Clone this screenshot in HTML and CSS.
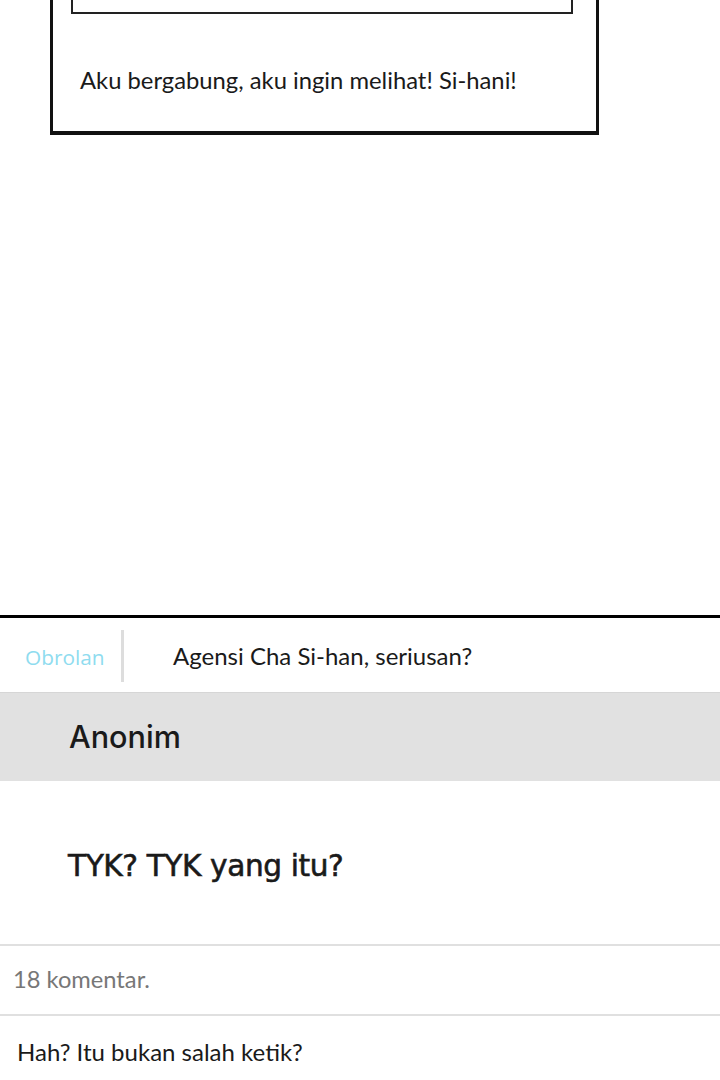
FILE: index.html
```html
<!DOCTYPE html>
<html lang="id">
<head>
<meta charset="utf-8">
<title>Komik</title>
<link rel="stylesheet" href="styles.css">
</head>
<body>
<div class="page">
  <section class="panel">
    <div class="panel-box">
      <div class="inner-box"></div>
      <p class="panel-text">Aku bergabung, aku ingin melihat! Si-hani!</p>
    </div>
  </section>
  <section class="chat">
    <div class="chat-head">
      <span class="chat-tab">Obrolan</span>
      <span class="chat-divider"></span>
      <span class="chat-title">Agensi Cha Si-han, seriusan?</span>
    </div>
    <div class="chat-author">Anonim</div>
    <div class="chat-body">TYK? TYK yang itu?</div>
    <div class="chat-count">18 komentar.</div>
    <div class="chat-comment">Hah? Itu bukan salah ketik?</div>
  </section>
</div>
</body>
</html>
```

FILE: styles.css
```css
* { box-sizing: border-box; }
html, body { margin: 0; padding: 0; background: #fff; }
body { width: 720px; height: 1080px; overflow: hidden; font-family: "Lato", "Open Sans", sans-serif; color: #1a1a1a; }
.page { display: flex; flex-direction: column; }

.panel { height: 615px; padding-left: 50px; }
.panel-box {
  width: 549px;
  margin-top: -40px;
  border: 3px solid #111;
  border-bottom-width: 4px;
  height: 175px;
  padding: 0 23px 0 18px;
  display: flex;
  flex-direction: column;
}
.inner-box { height: 51px; border: 2px solid #222; border-top: none; }
.panel-text {
  margin: 53px 0 0 9px;
  font-size: 23.8px;
  line-height: 26px;
}

.chat { border-top: 3px solid #000; display: flex; flex-direction: column; }
.chat-head { height: 74px; display: flex; align-items: center; }
.chat-tab { width: 121px; padding-left: 25px; color: #8fdcef; font-family: "Open Sans", sans-serif; font-size: 20.8px; padding-top: 3px; }
.chat-divider { width: 3px; height: 52px; background: #dddddd; margin-top: 2px; }
.chat-title { padding-left: 49px; font-size: 24px; }
.chat-author {
  height: 89px;
  background: #e1e1e1;
  border-top: 1px solid #d6d6d6;
  padding-left: 69px;
  display: flex;
  align-items: center;
  font-family: "Inter", sans-serif;
  font-weight: 500;
  font-size: 30.6px;
  padding-bottom: 2px;
}
.chat-body {
  height: 163px;
  padding-left: 68px;
  display: flex;
  align-items: center;
  font-family: "DejaVu Sans", sans-serif;
  font-size: 29.6px;
  letter-spacing: -0.4px;
  -webkit-text-stroke: 0.6px #1a1a1a;
  padding-top: 6px;
}
.chat-count {
  height: 72px;
  border-top: 2px solid #e0e0e0;
  border-bottom: 2px solid #e0e0e0;
  padding-left: 13px;
  display: flex;
  align-items: center;
  color: #777;
  font-size: 23.7px;
  padding-bottom: 2px;
}
.chat-comment {
  height: 70px;
  padding-left: 17px;
  display: flex;
  align-items: center;
  font-size: 24px;
  color: #1a1a1a;
}
```
